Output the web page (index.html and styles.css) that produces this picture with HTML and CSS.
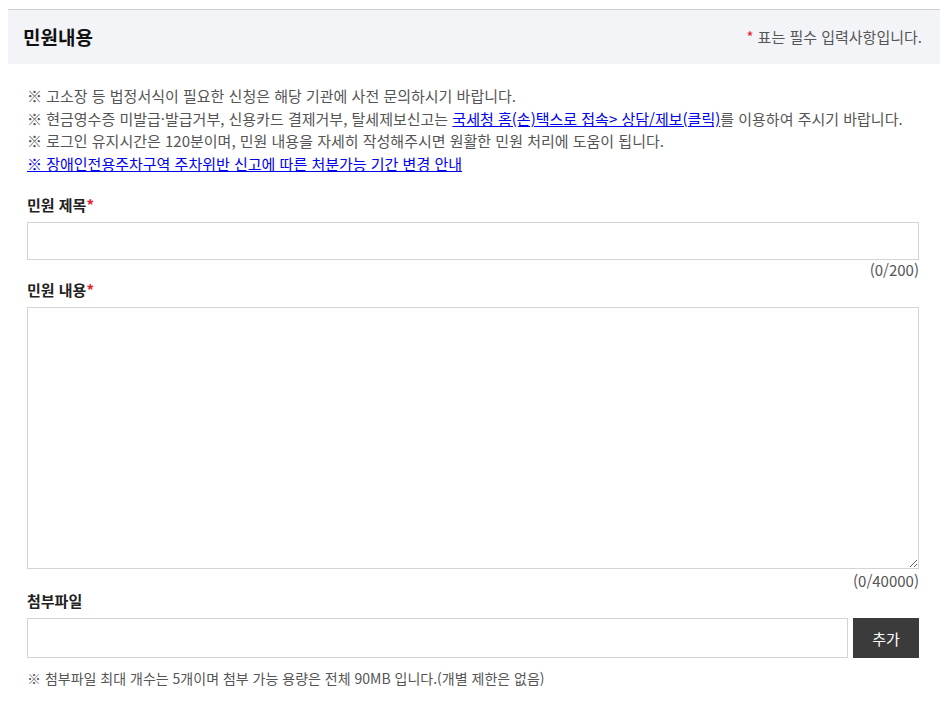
FILE: index.html
```html
<!DOCTYPE html>
<html lang="ko">
<head>
<meta charset="utf-8">
<title>민원내용</title>
<link rel="stylesheet" href="styles.css">
</head>
<body>
<div class="page">
  <div class="head">
    <h2 class="head-title">민원내용</h2>
    <p class="head-note"><span class="req">*</span> 표는 필수 입력사항입니다.</p>
  </div>
  <div class="content">
    <ul class="notes">
      <li>※ 고소장 등 법정서식이 필요한 신청은 해당 기관에 사전 문의하시기 바랍니다.</li>
      <li>※ 현금영수증 미발급·발급거부, 신용카드 결제거부, 탈세제보신고는 <a href="#">국세청 홈(손)택스로 접속&gt; 상담/제보(클릭)</a>를 이용하여 주시기 바랍니다.</li>
      <li>※ 로그인 유지시간은 120분이며, 민원 내용을 자세히 작성해주시면 원활한 민원 처리에 도움이 됩니다.</li>
      <li><a href="#">※ 장애인전용주차구역 주차위반 신고에 따른 처분가능 기간 변경 안내</a></li>
    </ul>
    <label class="label">민원 제목<span class="req">*</span></label>
    <input class="field" type="text">
    <div class="count">(0/200)</div>
    <label class="label">민원 내용<span class="req">*</span></label>
    <textarea class="area"></textarea>
    <div class="count count-area">(0/40000)</div>
    <label class="label">첨부파일</label>
    <div class="file-row">
      <input class="field file-field" type="text">
      <button class="btn-add" type="button">추가</button>
    </div>
    <p class="file-note">※ 첨부파일 최대 개수는 5개이며 첨부 가능 용량은 전체 90MB 입니다.(개별 제한은 없음)</p>
  </div>
</div>
</body>
</html>
```
FILE: styles.css
```css
html, body {
  margin: 0;
  padding: 0;
  background: #fff;
}
body {
  padding: 9px 0 0 8px;
  font-family: "Noto Sans CJK KR", "Noto Sans", sans-serif;
  color: #444;
  overflow: hidden;
}
.page {
  width: 932px;
}
.head {
  display: flex;
  align-items: center;
  justify-content: space-between;
  height: 54px;
  border-top: 1px solid #cfd0d4;
  background: #f3f4f8;
  padding: 0 18px 0 15px;
}
.head-title {
  margin: 0;
  font-size: 19px;
  font-weight: 700;
  color: #111;
  line-height: 24px;
}
.head-note {
  margin: 0;
  font-size: 15px;
  color: #555;
  line-height: 20px;
}
.req {
  color: #e4202e;
}
.content {
  padding: 21px 21px 0 19px;
}
.notes {
  list-style: none;
  margin: 0 0 20px;
  padding: 0;
  font-size: 15px;
  line-height: 22.5px;
  color: #555;
}
.notes a {
  color: #0000ee;
  text-decoration: underline;
}
.label {
  display: block;
  font-size: 15px;
  font-weight: 700;
  color: #222;
  line-height: 20px;
  margin-bottom: 7px;
}
.field {
  display: block;
  box-sizing: border-box;
  width: 100%;
  height: 38px;
  margin: 0;
  border: 1px solid #d4d4d4;
  background: #fff;
  outline: none;
}
.area {
  display: block;
  box-sizing: border-box;
  width: 100%;
  height: 262px;
  margin: 0;
  border: 1px solid #d4d4d4;
  background: #fff;
  resize: vertical;
}
.count {
  text-align: right;
  font-size: 15px;
  line-height: 20px;
  color: #555;
}
.count-area {
  margin-top: 2px;
}
.file-row {
  display: flex;
  gap: 5px;
}
.file-field {
  flex: 1;
  height: 40px;
}
.btn-add {
  width: 66px;
  height: 40px;
  border: 0;
  background: #3b3b3b;
  color: #fff;
  font-family: inherit;
  font-size: 15px;
  padding: 0;
}
.file-note {
  margin: 10px 0 0;
  font-size: 14px;
  line-height: 20px;
  color: #555;
}
```
